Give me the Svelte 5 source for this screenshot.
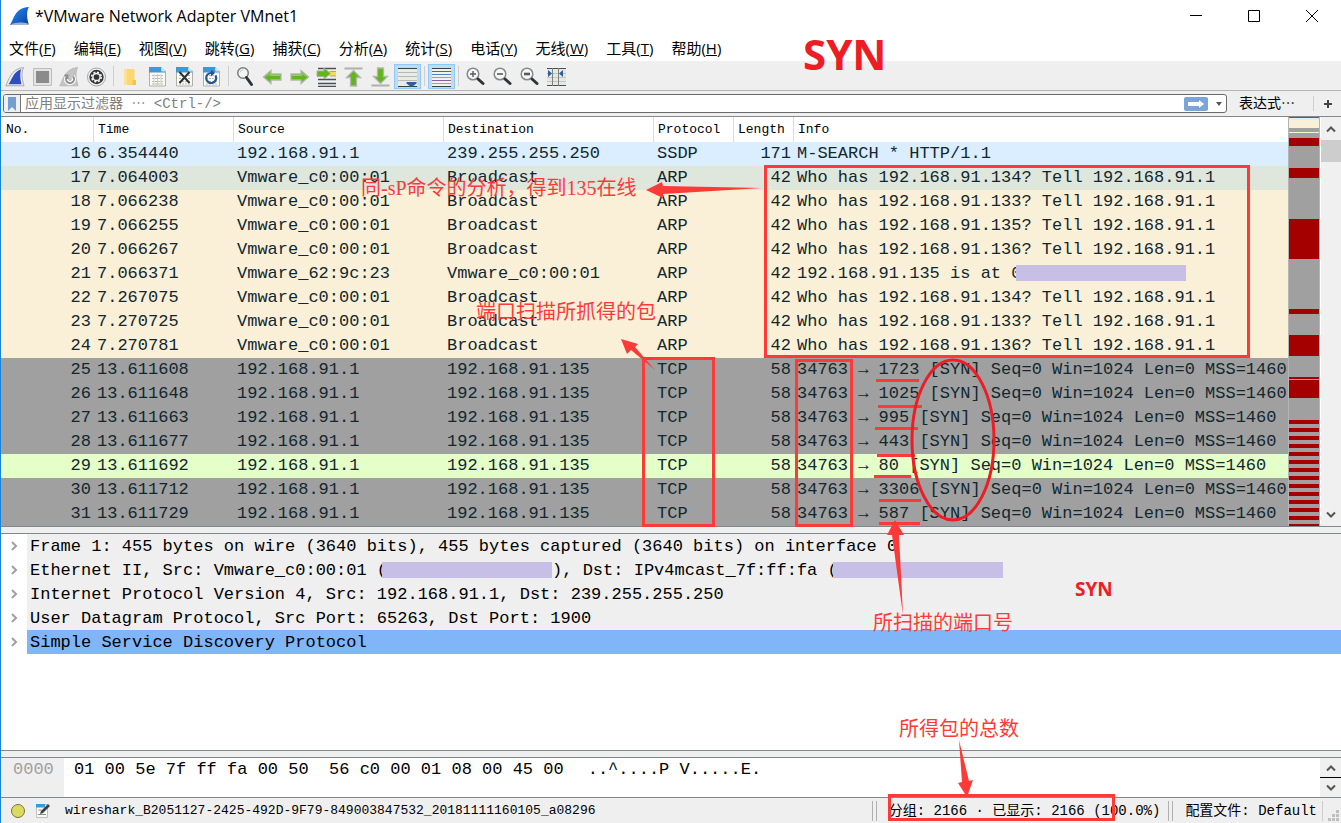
<script>
  const menus = [
    ['文件', 'F'], ['编辑', 'E'], ['视图', 'V'], ['跳转', 'G'], ['捕获', 'C'], ['分析', 'A'],
    ['统计', 'S'], ['电话', 'Y'], ['无线', 'W'], ['工具', 'T'], ['帮助', 'H']
  ];

  const tools = [
    ['start', 'stop', 'restart', 'options'],
    ['open', 'save', 'close', 'reload'],
    ['find', 'back', 'forward', 'goto', 'first', 'last', 'autoscroll'],
    ['colorize'],
    ['zoomin', 'zoomout', 'zoomreset', 'columns']
  ];
  const pressed = ['autoscroll', 'colorize'];

  const mac = 'Vmware_c0:00:01';
  const arp = (no, time, host, kind = 'arp') => ({
    no, time, src: mac, dst: 'Broadcast', proto: 'ARP', len: 42, kind,
    info: `Who has 192.168.91.${host}? Tell 192.168.91.1`
  });
  const tcp = (no, time, port, kind = 'tcp') => ({
    no, time, src: '192.168.91.1', dst: '192.168.91.135', proto: 'TCP', len: 58, kind,
    info: `34763 → ${port} [SYN] Seq=0 Win=1024 Len=0 MSS=1460`
  });

  const packets = [
    { no: 16, time: '6.354440', src: '192.168.91.1', dst: '239.255.255.250', proto: 'SSDP', len: 171, kind: 'udp', info: 'M-SEARCH * HTTP/1.1' },
    arp(17, '7.064003', 134, 'current'),
    arp(18, '7.066238', 133),
    arp(19, '7.066255', 135),
    arp(20, '7.066267', 136),
    { no: 21, time: '7.066371', src: 'Vmware_62:9c:23', dst: mac, proto: 'ARP', len: 42, kind: 'arp', info: '192.168.91.135 is at 0', masked: true },
    arp(22, '7.267075', 134),
    arp(23, '7.270725', 133),
    arp(24, '7.270781', 136),
    tcp(25, '13.611608', 1723),
    tcp(26, '13.611648', 1025),
    tcp(27, '13.611663', 995),
    tcp(28, '13.611677', 443),
    tcp(29, '13.611692', 80, 'http'),
    tcp(30, '13.611712', 3306),
    tcp(31, '13.611729', 587)
  ];

  const bands = [
    [0, 1, '#0078d7'], [1, 2, '#daeeff'], [3, 8, '#faf0d7'], [15, 1, '#e4ffc7'],
    [21, 8, '#a40000'], [51, 10, '#a40000'], [102, 40, '#a40000'], [192, 5, '#a40000'],
    [218, 21, '#a40000'], [260, 2, '#a40000'], [263, 18, '#a40000'],
    ...Array.from({ length: 13 }, (_, i) => [303 + i * 8, 4, '#a40000']),
    [407, 2, '#a40000']
  ];

  const underlines = [
    [876, 919, 380], [878, 922, 406], [875, 918, 428], [877, 915, 455],
    [874, 911, 476], [879, 921, 500], [879, 920, 523]
  ];
</script>

{#snippet page()}
  <path d="M2.5 1.5h12l4 4v14.500h-16z" fill="#fbfbf4" stroke="#aeb0aa" />
  <path d="M2 1h12.500v3.500h4v2H2z" fill="#3a9ad6" />
  <path d="M14.500 1l4.500 4.500h-4.500z" fill="#cfe4f2" />
  <path d="M5 9.500h12M5 12.500h12M5 15.500h12M5 18h12" stroke="#b9bbb2" stroke-dasharray="2 1" />
{/snippet}

{#snippet lens()}
  <circle cx="8" cy="8" r="5.800" fill="#f6f6f6" stroke="#85898a" stroke-width="1.500" />
  <path d="M13 13l5 4.500" stroke="#2e3436" stroke-width="3" stroke-linecap="round" />
{/snippet}

{#snippet icon(name)}
  <svg class="icon" viewBox="0 0 21 21" fill="none" aria-hidden="true">
    {#if name === 'start'}
      <path d="M.8 19.800C4 14 5.500 3 18.500 1.500 15.500 8 17.500 14.500 19 19.800z" fill="#eee" stroke="#a9a9a9" />
      <path d="M3.500 18.300C7 14 8 6 16 3.300 14.500 9 15.500 14 16.500 18.300z" fill="#2a4ec0" />
    {:else if name === 'stop'}
      <path d="M1.500 2.500h18v17h-18z" fill="#e4e4e4" stroke="#bdbdbd" />
      <path d="M4 5h13v12H4z" fill="#8b8b8b" />
    {:else if name === 'restart'}
      <path d="M.8 19.800C4 14 5.500 3 18.500 1.500 15.500 8 17.500 14.500 19 19.800z" fill="#c4c4c4" stroke="#b9b9b9" />
      <path d="M8 10.500a4 4 0 1 0 6 0" stroke="#fff" stroke-width="4" />
      <path d="M8 10.500a4 4 0 1 0 6 0M8.500 13V9.500H5.500" stroke="#8e8e8e" stroke-width="2" />
    {:else if name === 'options'}
      <circle cx="10.500" cy="11" r="9" fill="#f3f3f3" stroke="#a5a5a5" />
      <circle cx="10.500" cy="11" r="7.200" fill="#303436" />
      <circle cx="10.500" cy="11" r="4.800" stroke="#f3f3f3" stroke-width="1.600" stroke-dasharray="2 1.770" />
      <circle cx="10.500" cy="11" r="3.600" stroke="#f3f3f3" stroke-width="1.500" />
    {:else if name === 'open'}
      <path d="M4 3h8v16H4z" fill="#ffe193" />
      <path d="M7 3h7.500v11.500H16V19H7z" fill="#fbd673" />
      <path d="M12.500 14h3.500v5h-3.500z" fill="#f4c453" />
    {:else if name === 'save'}
      {@render page()}
      <path d="M7 8v11M10.500 8v11M14 8v11" stroke="#c9cbc3" />
    {:else if name === 'close'}
      {@render page()}
      <path d="M5.500 6l10 11M15.500 6l-10 11" stroke="#2b3032" stroke-width="2" />
    {:else if name === 'reload'}
      {@render page()}
      <path d="M14.500 9.500a5 5 0 1 1-4-2.500" stroke="#24569b" stroke-width="2.200" />
      <path d="M10 3.500l4 3.500-4 3.500z" fill="#24569b" />
    {:else if name === 'find'}
      <circle cx="8" cy="7" r="5.300" fill="#f4f5f5" stroke="#7a7f80" stroke-width="1.500" />
      <path d="M5 6.500a3 3 0 0 1 3-2.500" stroke="#c4c8c8" />
      <path d="M11.500 11.500l5 7" stroke="#2e3436" stroke-width="3" stroke-linecap="round" />
    {:else if name === 'back'}
      <path d="M1.500 11L9 4.500v3.500h10v6H9v3.500z" fill="#62b51c" stroke="#b3b8ae" stroke-width="1.300" />
      <path d="M4 10.500l4-3v2h10" stroke="#8fd44e" />
    {:else if name === 'forward'}
      <path d="M19.500 11L12 4.500v3.500H2v6h10v3.500z" fill="#62b51c" stroke="#b3b8ae" stroke-width="1.300" />
      <path d="M17 10.500l-4-3v2H3" stroke="#8fd44e" />
    {:else if name === 'goto'}
      <path d="M2 2.500h18M2 13.500h18M2 17.500h18M2 20.500h18" stroke="#4b5052" stroke-width="1.300" />
      <path d="M11 5h9v5h-9z" fill="#f6df4c" />
      <path d="M14 5.500h6M14 10h6" stroke="#a5a79e" />
      <path d="M14.500 7.500L8 2v3H1v5.500h7V13z" fill="#62b51c" stroke="#a9b09f" />
    {:else if name === 'first'}
      <path d="M1.500 2.500h18" stroke="#aeb1ac" stroke-width="2" />
      <path d="M10.500 4.500l7 7h-4V20h-6v-8.500h-4z" fill="#62b51c" stroke="#b3b8ae" stroke-width="1.300" />
    {:else if name === 'last'}
      <path d="M1.500 19.500h18" stroke="#aeb1ac" stroke-width="2" />
      <path d="M10.500 17.500l7-7h-4V2h-6v8.500h-4z" fill="#62b51c" stroke="#b3b8ae" stroke-width="1.300" />
    {:else if name === 'autoscroll'}
      <path d="M1 2h19v18H1z" fill="#e9ebe5" />
      <path d="M1 2.500h19M1 20.500h19" stroke="#3c4042" />
      <path d="M1 6.500h19M1 10.500h19M1 14.500h19" stroke="#b8bab3" />
      <path d="M9.500 16h10v1.500l-4 3h-2l-4-3z" fill="#2e5ca6" />
    {:else if name === 'colorize'}
      <path d="M1 2h19v18H1z" fill="#f1f2ee" />
      <path d="M1 2.500h19M1 20.500h19" stroke="#3c4042" />
      <path d="M1 5.500h19" stroke="#ef2929" />
      <path d="M1 8.500h19" stroke="#4f83c4" />
      <path d="M1 11.500h19" stroke="#73c92d" />
      <path d="M1 14.500h19" stroke="#86619b" />
      <path d="M1 17.500h19" stroke="#c8a513" />
    {:else if name === 'zoomin'}
      {@render lens()}
      <path d="M5 8h6M8 5v6" stroke="#555a5c" stroke-width="1.400" />
    {:else if name === 'zoomout'}
      {@render lens()}
      <path d="M5 8h6" stroke="#555a5c" stroke-width="1.600" />
    {:else if name === 'zoomreset'}
      {@render lens()}
      <path d="M5 8h6" stroke="#555a5c" stroke-width="2.600" />
    {:else if name === 'columns'}
      <path d="M1 2h19v18H1z" fill="#e6e8e2" />
      <path d="M1 2.500h19M1 19.500h19" stroke="#4b5052" />
      <path d="M1 7.500h19M1 11.500h19M1 15.500h19" stroke="#c3c5be" />
      <path d="M6.500 2v18M12.500 2v18" stroke="#7c8081" />
      <path d="M2 4l4 3.500L2 11zM17 4v7l-4-3.500z" fill="#2e5ca6" />
    {/if}
  </svg>
{/snippet}

{#snippet fin()}
  <svg class="fin" viewBox="0 0 20 20" aria-hidden="true">
    <defs>
      <linearGradient id="finFill" x1="0" y1="0" x2="1" y2="1">
        <stop offset="0" stop-color="#2c8df0" />
        <stop offset="1" stop-color="#0640a4" />
      </linearGradient>
    </defs>
    <path d="M0 19C4 14 4 2 19 1c-3 5-2 12 0 18z" fill="url(#finFill)" />
    <path d="M0 19c6-3 12-3 19-1v1z" fill="#9db5cf" />
  </svg>
{/snippet}

{#snippet chevron(dir)}
  <svg class="chev" viewBox="0 0 12 12" fill="none" aria-hidden="true">
    <path d={dir === 'up' ? 'M2 8.500l4-4 4 4' : dir === 'down' ? 'M2 3.500l4 4 4-4' : 'M4 2l4 4-4 4'} />
  </svg>
{/snippet}

<div class="window">
  <header class="title">
    {@render fin()}
    <h1>*VMware Network Adapter VMnet1</h1>
    <div class="controls">
      <button aria-label="最小化"><svg viewBox="0 0 12 12"><path d="M0 5.500h12" /></svg></button>
      <button aria-label="最大化"><svg viewBox="0 0 12 12"><path d="M.5.5h11v11H.5z" /></svg></button>
      <button aria-label="关闭"><svg viewBox="0 0 12 12"><path d="M0 0l12 12M12 0L0 12" /></svg></button>
    </div>
  </header>

  <nav class="menubar">
    {#each menus as [label, key]}
      <button>{label}(<u>{key}</u>)</button>
    {/each}
  </nav>

  <div class="toolbar">
    {#each tools as group}
      <div class="group">
        {#each group as name}
          <button aria-label={name} class:pressed={pressed.includes(name)}>{@render icon(name)}</button>
        {/each}
      </div>
    {/each}
  </div>

  <div class="filter">
    <div class="field">
      <button class="bookmark" aria-label="书签">
        <svg viewBox="0 0 10 14"><path d="M1 0h8v14l-4-4-4 4z" fill="#729fcf" /></svg>
      </button>
      <input type="text" aria-label="应用显示过滤器" placeholder="应用显示过滤器 ⋯ <Ctrl-/>" />
      <button class="apply" aria-label="应用">
        <svg viewBox="0 0 24 14"><rect width="24" height="14" rx="2" fill="#7ba5d6" /><path d="M4 5h11V3l5 4-5 4V9H4z" fill="#fff" /></svg>
      </button>
      <button class="drop" aria-label="历史">
        <svg viewBox="0 0 8 4"><path d="M1 0h6L4 4z" fill="#555" /></svg>
      </button>
    </div>
    <button class="expr">表达式⋯</button>
    <button class="add" aria-label="添加">
      <svg viewBox="0 0 8 8"><path d="M0 4h8M4 0v8" stroke="#444" stroke-width="2" /></svg>
    </button>
  </div>

  <section class="packets">
    <table>
      <colgroup>
        <col class="c-no" /><col class="c-time" /><col class="c-addr" /><col class="c-addr" />
        <col class="c-proto" /><col class="c-len" /><col />
      </colgroup>
      <thead>
        <tr><th>No.</th><th>Time</th><th>Source</th><th>Destination</th><th>Protocol</th><th>Length</th><th>Info</th></tr>
      </thead>
      <tbody>
        {#each packets as p}
          <tr class={p.kind}>
            <td class="num">{p.no}</td>
            <td>{p.time}</td>
            <td>{p.src}</td>
            <td>{p.dst}</td>
            <td>{p.proto}</td>
            <td class="num">{p.len}</td>
            <td>{p.info}{#if p.masked}<span class="mask"></span>{/if}</td>
          </tr>
        {/each}
      </tbody>
    </table>
    <svg class="minimap" viewBox="0 0 30 409" preserveAspectRatio="none" shape-rendering="crispEdges" aria-hidden="true">
      <rect width="30" height="409" fill="#a0a0a0" />
      {#each bands as [y, h, fill]}
        <rect {y} width="30" height={h} {fill} />
      {/each}
    </svg>
    <div class="scroll">
      <button aria-label="向上">{@render chevron('up')}</button>
      <span class="thumb"></span>
      <button class="end" aria-label="向下">{@render chevron('down')}</button>
    </div>
  </section>

  <section class="details">
    <ul>
      <li>{@render chevron('right')}<span>Frame 1: 455 bytes on wire (3640 bits), 455 bytes captured (3640 bits) on interface 0</span></li>
      <li>{@render chevron('right')}<span>Ethernet II, Src: Vmware_c0:00:01 (<i class="mask"></i>), Dst: IPv4mcast_7f:ff:fa (<i class="mask"></i></span></li>
      <li>{@render chevron('right')}<span>Internet Protocol Version 4, Src: 192.168.91.1, Dst: 239.255.255.250</span></li>
      <li>{@render chevron('right')}<span>User Datagram Protocol, Src Port: 65263, Dst Port: 1900</span></li>
      <li class="selected">{@render chevron('right')}<span>Simple Service Discovery Protocol</span></li>
    </ul>
  </section>

  <section class="bytes">
    <div class="offset">0000</div>
    <div class="hex">01 00 5e 7f ff fa 00 50  56 c0 00 01 08 00 45 00</div>
    <div class="ascii">..^....P V.....E.</div>
    <div class="spin">
      <button aria-label="向上">{@render chevron('up')}</button>
      <button aria-label="向下">{@render chevron('down')}</button>
    </div>
  </section>

  <footer class="status">
    <svg class="lamp" viewBox="0 0 16 16" aria-hidden="true"><circle cx="8" cy="8" r="6.500" fill="#dcdb5f" stroke="#74743a" /></svg>
    <svg class="note" viewBox="0 0 16 16" fill="none" aria-hidden="true">
      <path d="M1.500 1.500h11v13h-11z" fill="#f8f8f4" stroke="#c0c0bb" />
      <path d="M1 1h9v3.500H1z" fill="#3a9ad6" />
      <path d="M3.500 7h3M3 11.500h8" stroke="#8a8c88" />
      <path d="M5 11l1-3 7-7 2 2-7 7z" fill="#3b4042" />
    </svg>
    <span class="file">wireshark_B2051127-2425-492D-9F79-849003847532_20181111160105_a08296</span>
    <span class="count">分组: 2166 · 已显示: 2166 (100.0%)</span>
    <span class="profile">配置文件: Default</span>
    <svg class="grip" viewBox="0 0 12 12" aria-hidden="true"><path d="M8 0h3v3H8zM4 4h3v3H4zM8 4h3v3H8zM0 8h3v3H0zM4 8h3v3H4zM8 8h3v3H8z" fill="#bfbfbf" /></svg>
  </footer>

  <svg class="notes" width="1341" height="823" viewBox="0 0 1341 823" fill="none">
    <g stroke="#fd3a38" stroke-width="3">
      <rect x="765.500" y="166.500" width="483" height="190" />
      <rect x="643.500" y="358.500" width="70" height="167" />
      <rect x="796.500" y="360.500" width="55" height="165" />
      <rect x="889.500" y="795.500" width="224" height="24" />
      {#each underlines as [x1, x2, y]}
        <path d="M{x1} {y + 0.5}H{x2}" />
      {/each}
    </g>
    <ellipse cx="953" cy="440" rx="41" ry="80" stroke="#ee1c24" stroke-width="3" />
    <g fill="#fd3a38">
      <path d="M646 190L662 182 663 186 762 188 663 194 663 198z" />
      <path d="M621 339L638 344 635 347 655 370 631 350 627 354z" />
      <path d="M895 520L904 535H899L903 615 892 535H887z" />
      <path d="M967 797L958 783 962 782 959 740 969 781 973 780z" />
      <text x="361" y="195">同-sP命令的分析，得到135在线</text>
      <text x="476" y="319">端口扫描所抓得的包</text>
      <text x="873" y="630">所扫描的端口号</text>
      <text x="899" y="736">所得包的总数</text>
    </g>
    <text class="syn big" x="803" y="70">SYN</text>
    <text class="syn small" x="1075" y="596">SYN</text>
  </svg>
</div>

<style>
  :global(body) { margin: 0; background: #fff; }
  .window {
    position: relative;
    box-sizing: border-box;
    min-height: 100vh;
    display: flex;
    flex-direction: column;
    overflow: hidden;
    border-left: 1px solid #1883d7;
    background: #efefef;
    color: #000;
    font-family: "Liberation Mono", "Noto Sans CJK SC", monospace;
  }
  button {
    display: flex;
    align-items: center;
    justify-content: center;
    padding: 0;
    border: 0;
    background: none;
    color: inherit;
    font: inherit;
  }
  .title { display: flex; align-items: center; height: 32px; padding-left: 9px; background: #fff; }
  .fin { width: 20px; height: 20px; }
  h1 { flex: 1; margin: 0 0 0 5px; font: 400 16px/24px "Open Sans", "Noto Sans CJK SC", sans-serif; }
  .controls { display: flex; }
  .controls button { width: 58px; height: 32px; }
  .controls svg { width: 12px; height: 12px; fill: none; stroke: #000; }
  .menubar { display: flex; gap: 18px; height: 29px; padding: 0 8px; background: #fff; border-bottom: 1px solid #f0f0f0; }
  .menubar button { height: 32px; font: 400 15px/24px "Open Sans", "Noto Sans CJK SC", sans-serif; }
  .toolbar { display: flex; height: 28px; padding-left: 1px; border-bottom: 1px solid #b4b4b4; }
  .group { display: flex; align-items: center; }
  .group + .group::before { content: ""; width: 1px; height: 20px; margin: 0 3px; background: #cfcfcf; }
  .group button { box-sizing: border-box; width: 27px; height: 25px; }
  .group button.pressed { border: 1px solid #90c8f6; background: #bcdcf4; }
  .icon { width: 21px; height: 21px; flex: none; }
  .filter { display: flex; align-items: center; height: 25px; }
  .field {
    box-sizing: border-box;
    flex: 1;
    display: flex;
    height: 19px;
    margin-left: 2px;
    border: 1px solid #6b6b6b;
    border-radius: 3px;
    background: #fff;
    overflow: hidden;
  }
  .bookmark { width: 17px; border-right: 1px solid #777; background: #efefef; }
  .bookmark svg { width: 10px; height: 14px; }
  input {
    flex: 1;
    min-width: 0;
    padding: 1px 4px 0;
    border: 0;
    outline: 0;
    background: none;
    font: 14px/16px "Liberation Mono", "Noto Sans CJK SC", monospace;
  }
  input::placeholder { color: #808080; opacity: 1; }
  .apply svg { width: 24px; height: 14px; }
  .drop { width: 18px; }
  .drop svg { width: 8px; height: 4px; margin-left: 4px; }
  .expr { width: 86px; padding-right: 6px; font-size: 14px; line-height: 18px; }
  .add { width: 28px; height: 15px; border-left: 1px solid #cfcfcf; }
  .add svg { width: 8px; height: 8px; }

  .packets { display: flex; background: #fff; border: solid #828790; border-width: 1px 0; }
  table { flex: 1; min-width: 0; table-layout: fixed; border-collapse: collapse; }
  .c-no { width: 92px; }
  .c-time { width: 140px; }
  .c-addr { width: 210px; }
  .c-proto { width: 80px; }
  .c-len { width: 60px; }
  th {
    height: 25px;
    padding: 1px 5px 0;
    box-sizing: border-box;
    box-shadow: inset 1px 0 #dcdcdc;
    font-size: 13px;
    font-weight: 400;
    line-height: 24px;
    text-align: left;
  }
  th:first-child { box-shadow: none; }
  td {
    height: 24px;
    padding: 0 0 0 4px;
    overflow: hidden;
    color: #12272e;
    font-size: 17px;
    line-height: 24px;
    white-space: pre;
  }
  td.num { padding: 0 2px 0 0; text-align: right; }
  .udp { background: #daeeff; }
  .current { background: #dfe6dc; }
  .arp { background: #faf0d7; }
  .tcp { background: #a0a0a0; }
  .http { background: #e4ffc7; }
  .mask { display: inline-block; width: 170px; height: 16px; margin-left: -5px; background: #c8bfe7; vertical-align: -3px; }
  .minimap { width: 30px; height: 409px; border: solid #b4b4b4; border-width: 0 1px; }
  .scroll { display: flex; flex-direction: column; width: 20px; margin-left: 1px; background: #f0f0f0; }
  .scroll button { height: 23px; }
  .scroll .end { margin-top: auto; }
  .thumb { height: 22px; background: #cdcdcd; }
  .chev { width: 12px; height: 12px; stroke: #555; stroke-width: 2; }

  .details { flex: 1; margin-top: 6px; background: #fff; border: solid #828790; border-width: 1px 0; }
  ul { margin: 0; padding: 0; list-style: none; }
  li { display: flex; align-items: center; height: 24px; font-size: 17px; line-height: 22px; white-space: pre; }
  li .chev { margin: 0 7px; flex: none; stroke: #a0a0a0; }
  li span { flex: 1; padding: 2px 0 0 3px; background: #efefef; }
  li.selected span { background: #80b5f7; }

  .bytes { display: flex; height: 39px; margin-top: 6px; background: #fff; border: solid #828790; border-width: 1px 0; font-size: 17px; line-height: 24px; white-space: pre; }
  .offset { width: 51px; padding-left: 12px; background: #efefef; color: #a0a0a0; }
  .hex { padding-left: 10px; }
  .ascii { padding-left: 24px; }
  .spin { display: flex; flex-direction: column; width: 21px; margin-left: auto; background: #f0f0f0; }
  .spin button { flex: 1; }
  .spin button + button { border-top: 1px solid #000; }

  .status { display: flex; align-items: center; height: 25px; padding-left: 9px; font-size: 14px; white-space: pre; }
  .lamp, .note { width: 16px; height: 16px; flex: none; }
  .note { margin-left: 9px; }
  .file { flex: 1; padding-left: 14px; font-size: 13px; }
  .count, .profile { padding: 0 8px 0 16px; border-left: 1px solid #b0b0b0; line-height: 20px; position: relative; }
  .count::before, .profile::before { content: ""; position: absolute; left: 3px; top: 0; bottom: 0; width: 1px; background: #b0b0b0; }
  .profile { padding-right: 5px; border-right: 1px solid #cfcfcf; }
  .grip { width: 12px; height: 12px; margin: 10px 1px 0 5px; }

  .notes { position: absolute; left: -1px; top: 0; pointer-events: none; }
  .notes text { font: 400 20px "Liberation Serif", "Noto Sans CJK SC", serif; }
  .notes .syn { fill: #ee1c24; font-family: "Open Sans", sans-serif; font-weight: 700; }
  .notes .big { font-size: 42px; }
  .notes .small { font-size: 19px; }
</style>
